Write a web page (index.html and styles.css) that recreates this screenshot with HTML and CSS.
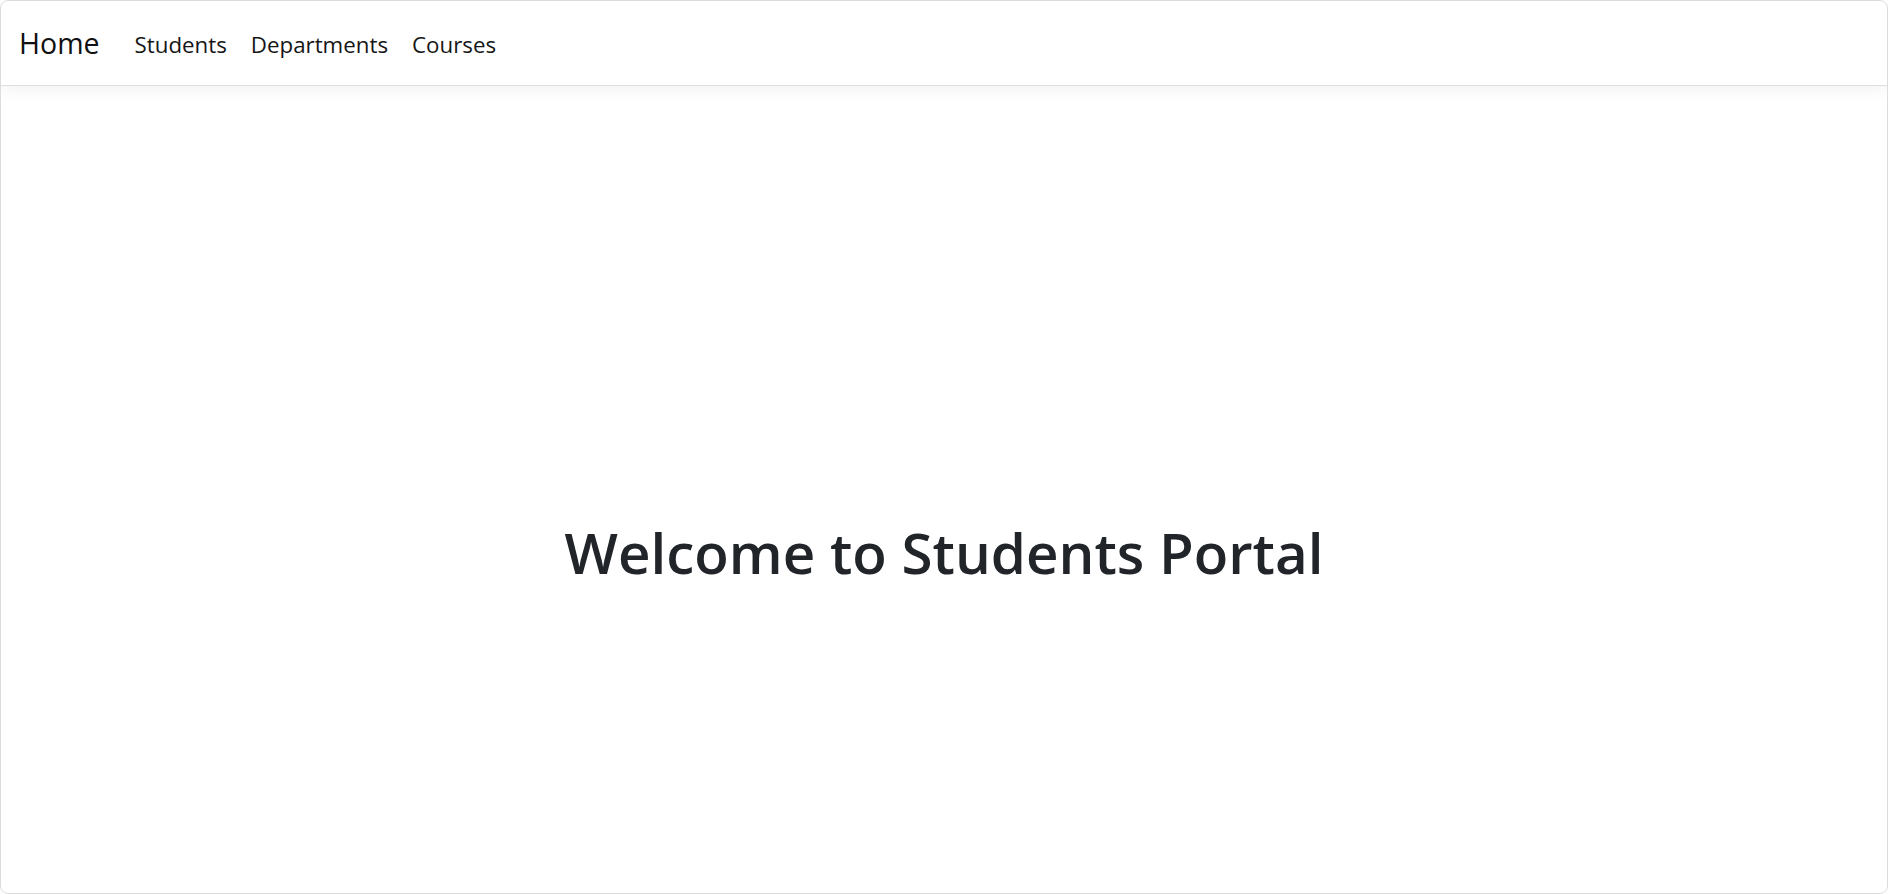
FILE: index.html
```html
<!DOCTYPE html>
<html lang="en">
<head>
<meta charset="utf-8">
<title>Students Portal</title>
<link rel="stylesheet" href="styles.css">
</head>
<body>
<div class="window">
  <nav class="navbar">
    <a class="brand" href="#">Home</a>
    <ul class="nav">
      <li><a class="nav-link" href="#">Students</a></li>
      <li><a class="nav-link" href="#">Departments</a></li>
      <li><a class="nav-link" href="#">Courses</a></li>
    </ul>
  </nav>
  <main class="main">
    <h1 class="title">Welcome to Students Portal</h1>
  </main>
</div>
</body>
</html>
```

FILE: styles.css
```css
* { box-sizing: border-box; }
html, body {
  margin: 0;
  padding: 0;
  height: 100%;
  background: #ffffff;
}
body {
  font-family: "Open Sans", "Noto Sans", sans-serif;
  color: #212529;
}
.window {
  height: 894px;
  border: 1px solid #dcdcdc;
  border-radius: 8px;
  overflow: hidden;
  display: flex;
  flex-direction: column;
  background: #fff;
}
.navbar {
  height: 85px;
  flex: none;
  display: flex;
  align-items: center;
  padding: 2px 18px 0;
  border-bottom: 1px solid #dedede;
  box-shadow: 0 6px 14px rgba(0, 0, 0, 0.045);
  position: relative;
  z-index: 1;
}
.brand {
  font-size: 28.5px;
  color: #111;
  text-decoration: none;
  margin-right: 23px;
  padding-bottom: 2px;
}
.nav {
  list-style: none;
  margin: 0;
  padding: 0;
  display: flex;
}
.nav-link {
  display: block;
  font-size: 22.3px;
  color: #161616;
  text-decoration: none;
  padding: 0 12px;
}
.main {
  flex: 1;
  display: flex;
  align-items: center;
  justify-content: center;
  padding-top: 126px;
}
.title {
  margin: 0;
  font-size: 56.5px;
  font-weight: 600;
  line-height: 1.2;
  color: #212529;
  letter-spacing: 0;
}
```
